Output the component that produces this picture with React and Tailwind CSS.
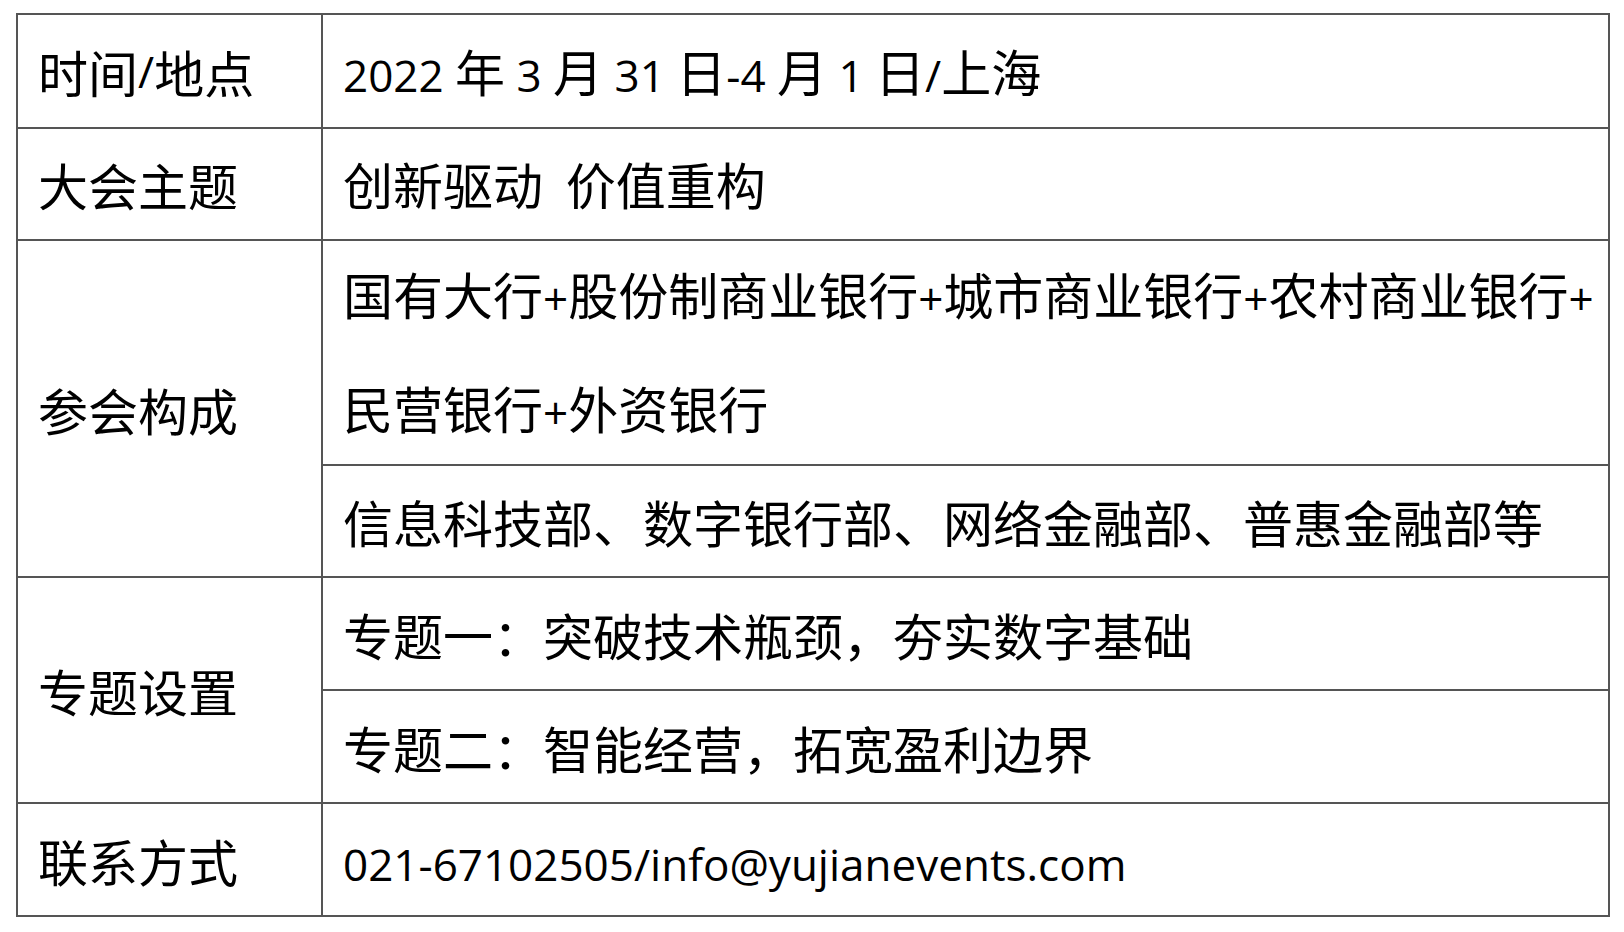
import React from 'react'

const CJK = "font-['Noto_Sans_CJK_SC',sans-serif]"

// ASCII runs are set in a Latin face, the rest in the CJK face
function Mixed({ text }) {
  const parts = text.split(/([\x20-\x7e]+)/)
  return (
    <>
      {parts.map((p, i) =>
        /^[\x20-\x7e]+$/.test(p) ? (
          <span key={i} className="font-['Open_Sans',sans-serif] font-medium text-[44px] whitespace-pre">{p}</span>
        ) : (
          <span key={i}>{p}</span>
        )
      )}
    </>
  )
}

function Cell({ h, last, children, lines }) {
  return (
    <div
      className={`flex items-center pl-[20px] whitespace-nowrap ${last ? '' : 'border-b-2 border-[#555]'}`}
      style={{ height: h }}
    >
      <div className={lines ? 'leading-[109px]' : 'leading-none'}>{children}</div>
    </div>
  )
}

// heights are border-box: cells with a bottom rule include its 2px
const rows = [
  { label: '时间/地点', cells: [{ h: 112, text: '2022 年 3 月 31 日-4 月 1 日/上海' }] },
  { label: '大会主题', cells: [{ h: 110, text: '创新驱动  价值重构' }] },
  {
    label: '参会构成',
    cells: [
      { h: 225, text: ['国有大行+股份制商业银行+城市商业银行+农村商业银行+', '民营银行+外资银行'] },
      { h: 110, text: '信息科技部、数字银行部、网络金融部、普惠金融部等' },
    ],
  },
  {
    label: '专题设置',
    cells: [
      { h: 113, text: '专题一：突破技术瓶颈，夯实数字基础' },
      { h: 111, text: '专题二：智能经营，拓宽盈利边界' },
    ],
  },
  { label: '联系方式', cells: [{ h: 111, text: '021-67102505/info@yujianevents.com' }] },
]

export default function App() {
  return (
    <div className={`w-[1624px] h-[932px] bg-white pt-[13px] pl-[16px] text-black text-[50px] ${CJK}`}>
      <div className="w-[1594px] border-2 border-[#555] flex flex-col">
        {rows.map((r, ri) => {
          const isLast = ri === rows.length - 1
          return (
            <div key={r.label} className={`flex ${isLast ? '' : 'border-b-2 border-[#555]'}`}>
              <div className="w-[305px] shrink-0 border-r-2 border-[#555] flex items-center pl-[20px] leading-none">
                <Mixed text={r.label} />
              </div>
              <div className="flex-1 flex flex-col">
                {r.cells.map((c, ci) => (
                  <Cell key={ci} h={c.h} last={ci === r.cells.length - 1} lines={Array.isArray(c.text)}>
                    {Array.isArray(c.text)
                      ? c.text.map((t, ti) => (
                          <div key={ti}>
                            <Mixed text={t} />
                          </div>
                        ))
                      : <Mixed text={c.text} />}
                  </Cell>
                ))}
              </div>
            </div>
          )
        })}
      </div>
    </div>
  )
}
